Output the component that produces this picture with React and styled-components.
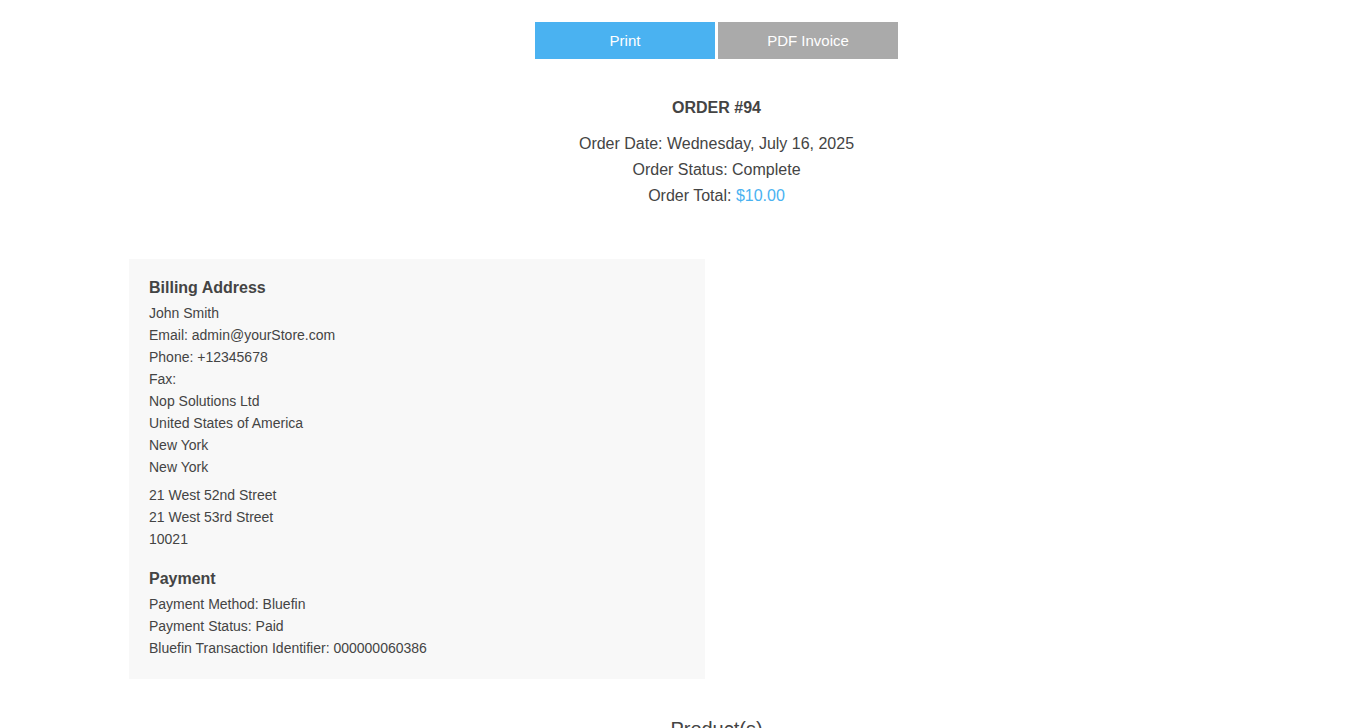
import React from "react";
import styled, { createGlobalStyle } from "styled-components";

const GlobalStyle = createGlobalStyle`
  body {
    margin: 0;
    background: #fff;
    font-family: "Liberation Sans", Arial, sans-serif;
    color: #444;
  }
`;

const order = {
  number: 94,
  date: "Wednesday, July 16, 2025",
  status: "Complete",
  total: "$10.00",
};

const billing = [
  "John Smith",
  "Email: admin@yourStore.com",
  "Phone: +12345678",
  "Fax:",
  "Nop Solutions Ltd",
  "United States of America",
  "New York",
  "New York",
];

const street = ["21 West 52nd Street", "21 West 53rd Street", "10021"];

const payment = [
  "Payment Method: Bluefin",
  "Payment Status: Paid",
  "Bluefin Transaction Identifier: 000000060386",
];

const App = () => {
  return (
    <>
      <GlobalStyle />
      <Page>
        <Actions>
          <ActionButton $variant="primary">Print</ActionButton>
          <ActionButton>PDF Invoice</ActionButton>
        </Actions>

        <Overview>
          <OrderNumber>ORDER #{order.number}</OrderNumber>
          <OverviewList>
            <li>Order Date: {order.date}</li>
            <li>Order Status: {order.status}</li>
            <li>
              Order Total: <Total>{order.total}</Total>
            </li>
          </OverviewList>
        </Overview>

        <InfoBox>
          <BoxTitle $top={1}>Billing Address</BoxTitle>
          <InfoList>
            {billing.map((line, i) => (
              <li key={i}>{line}</li>
            ))}
          </InfoList>
          <InfoList $gap={6}>
            {street.map((line, i) => (
              <li key={i}>{line}</li>
            ))}
          </InfoList>

          <BoxTitle $top={19}>Payment</BoxTitle>
          <InfoList>
            {payment.map((line, i) => (
              <li key={i}>{line}</li>
            ))}
          </InfoList>
        </InfoBox>

        <SectionTitle>Product(s)</SectionTitle>
      </Page>
    </>
  );
};

export default App;

const Page = styled.div`
  width: 1175px;
  margin-left: 129px;
  padding-top: 22px;
`;

const Actions = styled.div`
  display: flex;
  justify-content: center;
  gap: 3px;
`;

const ActionButton = styled.button`
  width: 180px;
  height: 37px;
  border: none;
  padding: 0;
  background-color: ${(p) => (p.$variant === "primary" ? "#4ab2f1" : "#aaaaaa")};
  color: #fff;
  font-family: "Liberation Sans", Arial, sans-serif;
  font-size: 15px;
  cursor: pointer;
`;

const Overview = styled.div`
  margin-top: 39px;
  text-align: center;
`;

const OrderNumber = styled.h1`
  margin: 0;
  font-size: 16px;
  line-height: 20px;
  font-weight: bold;
  color: #444;
`;

const OverviewList = styled.ul`
  list-style: none;
  margin: 13px 0 0;
  padding: 0;
  font-size: 16px;
  line-height: 26px;
`;

const Total = styled.span`
  color: #4ab2f1;
`;

const InfoBox = styled.div`
  width: 576px;
  box-sizing: border-box;
  margin-top: 50px;
  padding: 18px 20px 20px;
  background: #f8f8f8;
`;

const BoxTitle = styled.div`
  margin: ${(p) => p.$top || 0}px 0 4px;
  font-size: 16px;
  line-height: 20px;
  font-weight: bold;
`;

const InfoList = styled.ul`
  list-style: none;
  margin: ${(p) => p.$gap || 0}px 0 0;
  padding: 0;
  font-size: 14px;
  line-height: 22px;
`;

const SectionTitle = styled.div`
  margin-top: 40px;
  text-align: center;
  font-size: 20px;
  line-height: 20px;
  color: #444;
`;
